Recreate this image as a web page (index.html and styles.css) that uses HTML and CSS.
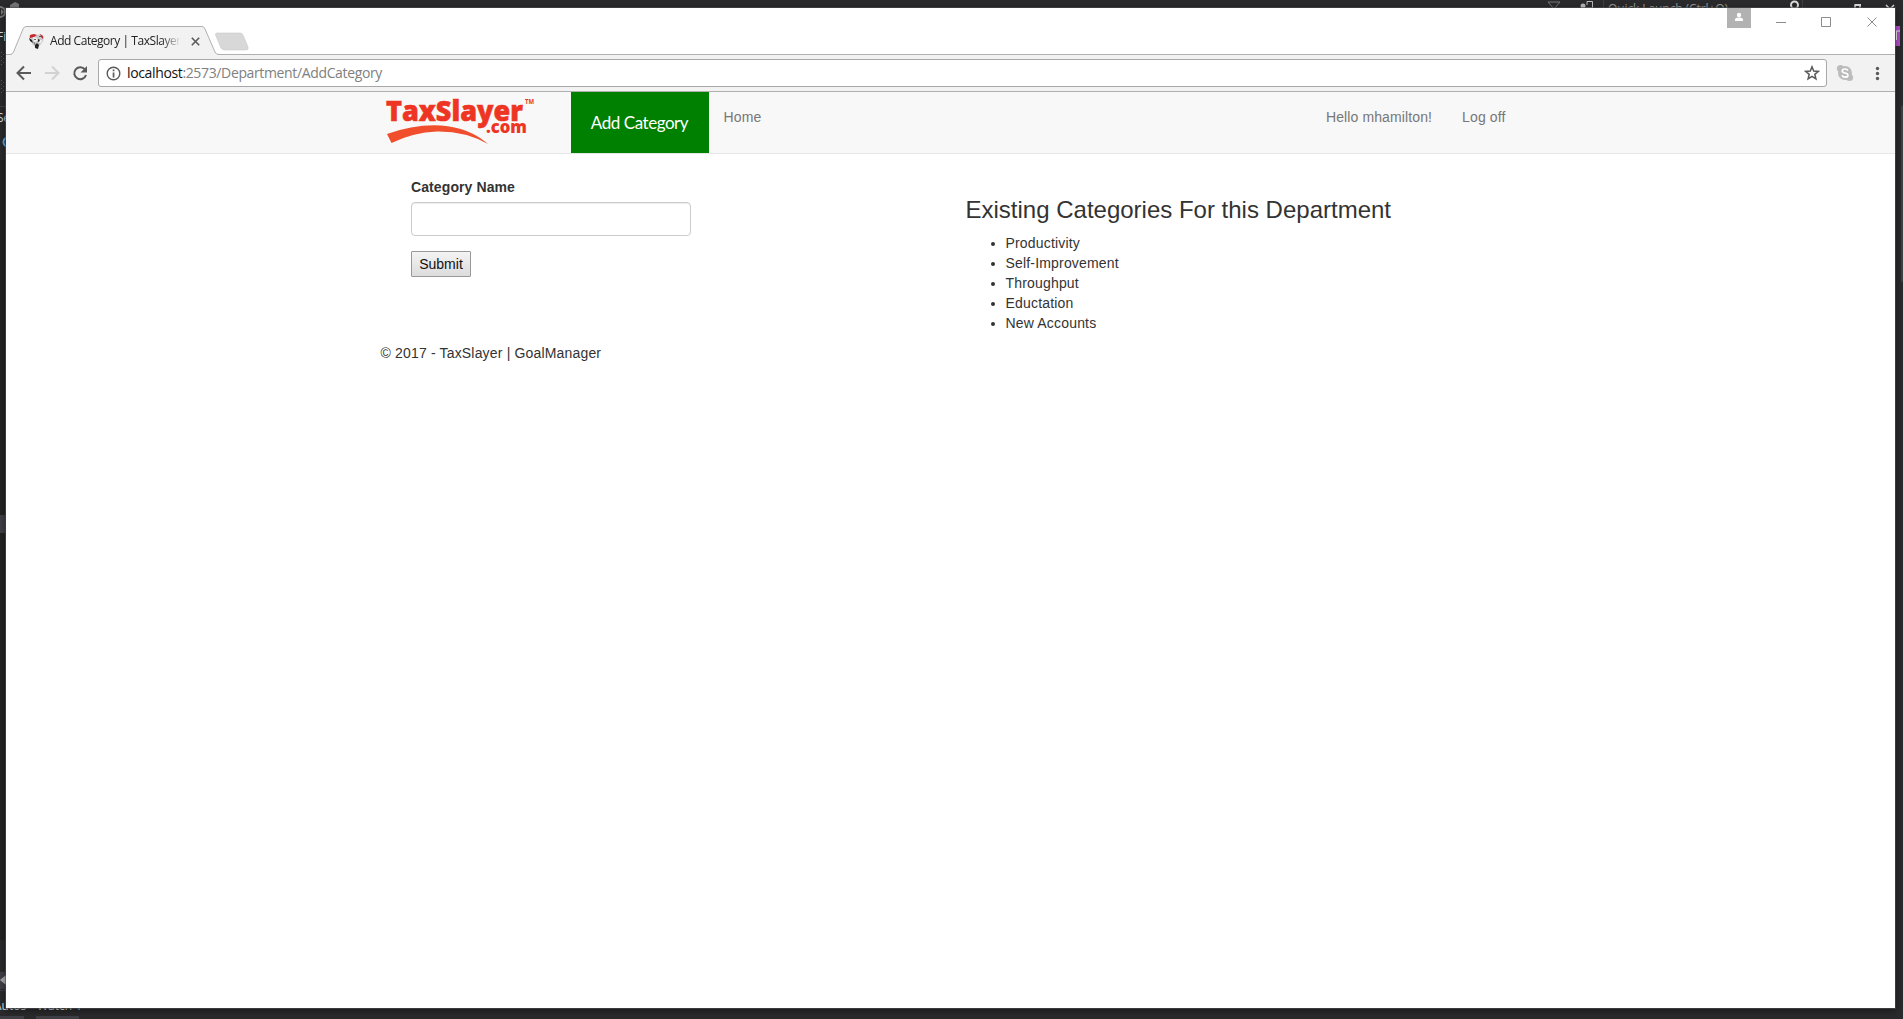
FILE: index.html
```html
<!DOCTYPE html>
<html lang="en">
<head>
<meta charset="utf-8">
<title>Add Category | TaxSlayer</title>
<link rel="stylesheet" href="styles.css">
</head>
<body>
<div class="desktop">
  <svg class="editor" width="1903" height="1019" viewBox="0 0 1903 1019">
    <rect width="1903" height="1019" fill="#2a2a2c"/>
    <path d="M0 160h5v780H0z" fill="#232323"/>
    <path d="M0 515h5v18H0zM0 972h5v17H0z" fill="#3f3f46"/>
    <path d="M0 106h6v1H0zM0 990h6v1H0z" fill="#3f3f46"/>
    <path d="M0 1016h24v3H0zM36 1016h43v3H36z" fill="#3f3f46"/>
    <path d="M0 980l6-5v10z" fill="#aaa"/>
    <path d="M10 8l0-3 5-3 4 2v4z" fill="#777"/>
    <circle cx="0" cy="12" r="5" fill="none" stroke="#777" stroke-width="2"/>
    <path d="M1 9l3 3-3 3z" fill="#777"/>
    <g fill="#5a5a5e"><path d="M1 52h1v1H1zM3 54h1v1H3zM1 56h1v1H1zM3 58h1v1H3zM1 60h1v1H1zM3 62h1v1H3zM1 64h1v1H1zM1 80h1v1H1zM3 82h1v1H3zM1 84h1v1H1zM3 86h1v1H3zM1 88h1v1H1zM3 90h1v1H3zM1 92h1v1H1z"/></g>
    <g class="editor-text" fill="#ddd">
      <text x="-3" y="41">File</text>
      <text x="-3" y="122">Server</text>
      <text x="-6" y="1010">Autos</text>
      <text x="37" y="1010">Watch 1</text>
      <text x="1608" y="13" fill="#999" textLength="120">Quick Launch (Ctrl+Q)</text>
    </g>
    <circle cx="8" cy="142" r="4.500" fill="none" stroke="#5aa7e8" stroke-width="2"/>
    <path d="M1548 2h12l-6 7z" fill="none" stroke="#777"/>
    <path d="M1587 5V1.500h5.500V8H1586" fill="none" stroke="#bbb"/><circle cx="1583" cy="6" r="2.500" fill="#bbb"/>
    <path d="M1603 0h1v8h-1zM1802 0h1v8h-1z" fill="#3f3f46"/>
    <circle cx="1794.500" cy="5" r="3.500" fill="none" stroke="#ddd" stroke-width="2"/>
    <path d="M1855 8V5h5v3M1886 5l4 4 4-4" fill="none" stroke="#ddd" stroke-width="1.500"/>
    <path d="M1855 4h6v2h-6z" fill="#ddd"/>
    <path d="M1895 26h5v20h-5z" fill="#b04fc8"/><path d="M1896 31h4M1896.500 31v9" stroke="#eee"/>
    <path d="M1901 106h2v176h-2z" fill="#3f3f46"/>
  </svg>
  <main class="window">
    <header class="tabstrip">
      <svg class="tabs" width="250" height="30" viewBox="0 0 250 30">
        <path d="M0 28.500H4Q6.500 28.500 7.500 26L17 3Q18 .5 20 .5H196Q198 .5 199 3L209 26Q210 28.500 213 28.500V30H0z" fill="#f2f2f2"/>
        <path d="M0 28.500H4Q6.500 28.500 7.500 26L17 3Q18 .5 20 .5H196Q198 .5 199 3L209 26Q210 28.500 213 28.500H250" fill="none" stroke="#b0b0b0"/>
        <path d="M211 7H234Q236 7 237 9L242 21Q243 24 240 24H219Q216 24 215 22L209.500 9Q209 7 211 7z" fill="#d8d8d8" stroke="#c9c9c9" stroke-width=".6"/>
      </svg>
      <div class="tab">
        <svg width="15" height="16" viewBox="0 0 15 16">
          <path d="M0 3L3 1l4 1 5-1 3 3-1 4-2 3-4 4-4-3-3-5z" fill="#c9c9c9"/>
          <path d="M1 2l4-1 3 1-3 2-4 1zM11 1l3 2 0 3-2-2z" fill="#c8282d"/>
          <path d="M0 5l3 2 1 3-3-2zM6 12l2-2 2 2-1 4-3-1zM9 6l2 1-1 2-2-1z" fill="#222"/>
          <path d="M4 4l4 1 1 3-4 1zM11 7l2 0-1 3-2 0z" fill="#f2f2f2"/>
          <path d="M5 6h2v1H5zM4 9l2 1v2zM10 3h2v1h-2z" fill="#666"/>
        </svg>
        <span class="tab-title">Add Category | TaxSlayer</span>
        <svg class="tab-close" width="9" height="9" viewBox="0 0 9 9"><path d="M.8.8l7.400 7.400M8.200.8L.8 8.200" stroke="#5a5a5a" stroke-width="1.600"/></svg>
      </div>
      <svg class="controls" width="168" height="20" viewBox="0 0 168 20">
        <path d="M0 0h24v20H0z" fill="#b2b2b2"/><circle cx="12" cy="7" r="2.200" fill="#fff"/><path d="M8 13v-1.500q0-2 4-2t4 2V13z" fill="#fff"/>
        <path d="M49 14.500h10M94.500 9.500h9v9h-9zM140.500 9.500l9 9M149.500 9.500l-9 9" fill="none" stroke="#8d8d8d"/>
      </svg>
    </header>
    <div class="toolbar">
      <svg width="92" height="36" viewBox="0 0 92 36" fill="none" stroke="#5a5a5a" stroke-width="2">
        <path d="M25 18H12.500M18 11.500L11.500 18l6.500 6.500"/>
        <path d="M39 18h12.500M46 11.500l6.500 6.500-6.500 6.500" stroke="#d2d2d2"/>
        <path d="M79 14.500A6 6 0 1 0 80 20"/><path d="M81 11v6.500h-6.500z" fill="#5a5a5a" stroke="none"/>
      </svg>
      <div class="address">
        <svg width="15" height="15" viewBox="0 0 15 15"><circle cx="7.500" cy="7.500" r="6.300" fill="none" stroke="#5a5a5a" stroke-width="1.400"/><path d="M6.700 3.500h1.700v1.700H6.700zM6.700 6.500h1.700v5H6.700z" fill="#5a5a5a"/></svg>
        <span class="url"><b>localhost</b>:2573/Department/AddCategory</span>
        <svg class="star" width="16" height="16" viewBox="0 0 16 16"><path d="M8 1.800l1.700 4.300 4.600.3-3.500 2.900 1.100 4.500L8 11.300l-3.900 2.500 1.100-4.500-3.500-2.900 4.600-.3z" fill="none" stroke="#5a5a5a" stroke-width="1.500"/></svg>
      </div>
      <svg class="extensions" width="68" height="36" viewBox="0 0 68 36">
        <g fill="#bcbcbc"><circle cx="18" cy="18" r="7"/><circle cx="13.500" cy="13.500" r="3.600"/><circle cx="22.500" cy="22.500" r="3.600"/></g>
        <path d="M20.800 15.500Q20 14 18 14q-2.700 0-2.700 2 0 1.500 2.700 2 2.900.5 2.900 2.200 0 2-2.900 2-2.300 0-3-1.800" fill="none" stroke="#fff" stroke-width="1.700"/>
        <g fill="#5a5a5a"><circle cx="50.500" cy="13.500" r="1.700"/><circle cx="50.500" cy="18.500" r="1.700"/><circle cx="50.500" cy="23.500" r="1.700"/></g>
      </svg>
    </div>
    <nav class="navbar">
      <div class="container nav-row">
        <svg class="logo" width="160" height="56" viewBox="0 0 160 56" fill="#ee3524">
          <text class="logo-name" x="5" y="29" textLength="137" lengthAdjust="spacingAndGlyphs">TaxSlayer</text>
          <text class="logo-com" x="105" y="41" textLength="41" lengthAdjust="spacingAndGlyphs">.com</text>
          <text class="logo-tm" x="144" y="12" textLength="9" lengthAdjust="spacingAndGlyphs">TM</text>
          <path d="M6 42Q34 32 60 33.500Q88 35.500 107 52Q84 39 56 39.500Q32 40.500 10.500 51z" fill="#f04e2d"/>
        </svg>
        <a class="brand">Add Category</a>
        <a class="link">Home</a>
        <a class="link user">Hello mhamilton!</a>
        <a class="link">Log off</a>
      </div>
    </nav>
    <div class="container">
      <div class="columns">
        <form class="form">
          <label for="name">Category Name</label>
          <input id="name" type="text">
          <button type="button">Submit</button>
        </form>
        <section class="existing">
          <h3>Existing Categories For this Department</h3>
          <ul><li>Productivity</li><li>Self-Improvement</li><li>Throughput</li><li>Eductation</li><li>New Accounts</li></ul>
        </section>
      </div>
      <footer>© 2017 - TaxSlayer | GoalManager</footer>
    </div>
  </main>
</div>
</body>
</html>
```
FILE: styles.css
```css
* { box-sizing: border-box; }
body { margin: 0; font: 14px/20px "Liberation Sans", Arial, sans-serif; color: #333; }
svg { display: block; flex: none; }
.desktop { position: relative; width: 1903px; height: 1019px; overflow: hidden; background: #2a2a2c; }
.editor-text { font: 12px "Open Sans", sans-serif; }
.window { position: absolute; left: 6px; top: 8px; width: 1889px; height: 1000px; background: #fff; box-shadow: 0 0 0 1px rgba(80,80,82,.6), 0 2px 7px 1px rgba(0,0,0,.4); }

.tabstrip { position: relative; height: 47px; border-bottom: 1px solid #b0b0b0; display: flex; justify-content: flex-end; }
.tabs { position: absolute; left: 0; top: 18px; }
.tab { position: absolute; left: 23px; top: 24px; width: 171px; height: 18px; display: flex; align-items: center; }
.tab-title { width: 131px; margin-left: 6px; overflow: hidden; white-space: nowrap; font: 12px/18px "Open Sans", sans-serif; letter-spacing: -.45px; color: #222; -webkit-mask-image: linear-gradient(90deg, #000 85%, transparent); mask-image: linear-gradient(90deg, #000 85%, transparent); }
.tab-close { margin-left: auto; }

.toolbar { height: 37px; background: #f2f2f2; border-bottom: 1px solid #b0b0b0; display: flex; align-items: flex-start; }
.address { flex: 1; height: 28px; margin-top: 4px; padding: 0 6px 0 7px; display: flex; align-items: center; background: #fff; border: 1px solid #a8a8a8; border-radius: 3px; }
.url { margin-left: 6px; font: 14px/20px "Open Sans", sans-serif; letter-spacing: -.36px; color: #808080; }
.url b { font-weight: 400; color: #111; }
.star { margin-left: auto; }

.navbar { height: 62px; background: #f8f8f8; border-bottom: 1px solid #e7e7e7; }
.container { width: 1170px; margin: 0 auto; padding: 0 15px; }
.nav-row { display: flex; align-items: flex-start; }
.brand { width: 138px; height: 61px; margin-left: 30px; background: green; color: #fff; font: 17px/61px Lato, sans-serif; letter-spacing: -.45px; text-align: center; white-space: nowrap; }
.link { padding: 15px; color: #777; letter-spacing: .12px; }
.user { margin-left: auto; }
.logo-name { font: 800 29px "Open Sans", sans-serif; stroke: #ee3524; stroke-width: .6; }
.logo-com { font: 800 18px "Open Sans", sans-serif; }
.logo-tm { font: 700 7px "Open Sans", sans-serif; }

.columns { display: flex; height: 189px; padding: 23px 15px 0; }
.form { width: 570px; padding-left: 15.5px; }
label { display: block; height: 25px; font-weight: 700; letter-spacing: .1px; }
input { display: block; width: 280px; height: 34px; margin-bottom: 15px; border: 1px solid #ccc; border-radius: 4px; box-shadow: inset 0 1px 1px rgba(0,0,0,.075); }
button { display: block; width: 60px; height: 26px; padding: 0; border: 1px solid #999; border-radius: 1px; background: linear-gradient(#f4f4f4, #dcdcdc); font: inherit; color: #111; }
.existing { padding-top: 20px; }
h3 { margin: 0 0 10px; font-size: 24px; font-weight: 400; line-height: 26.4px; }
ul { margin: 0; padding-left: 40px; letter-spacing: .18px; }
footer { letter-spacing: .17px; }
```
